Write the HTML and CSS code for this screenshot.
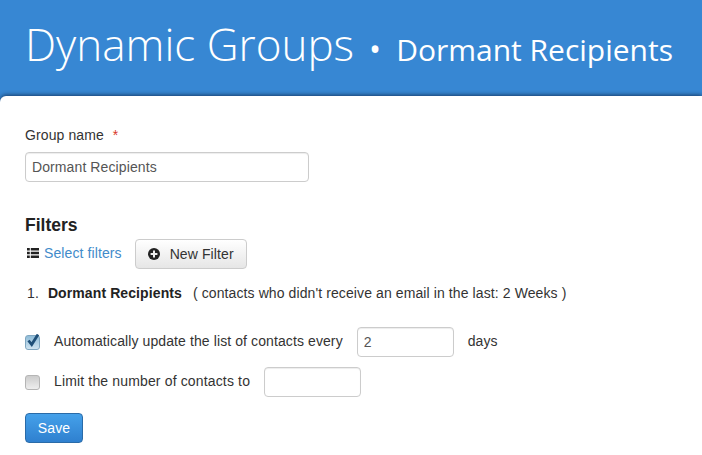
FILE: index.html
```html
<!DOCTYPE html>
<html>
  <head>
    <title>Dynamic Groups</title>
    <meta name="viewport" content="width=device-width, initial-scale=1">
    <link rel="stylesheet" href="styles.css">
  </head>
  <body>
    <div class="header">
      <h1>Dynamic Groups</h1>
      <span class="dot">&bull;</span>
      <h2>Dormant Recipients</h2>
    </div>
    <div class="content">
      <label class="field-label">Group name <span class="required">*</span></label>
      <input class="input name-input" type="text" value="Dormant Recipients">

      <h3>Filters</h3>
      <div class="filter-actions">
        <a class="select-link" href="#">
          <svg width="12" height="10" viewBox="0 0 12 10"><path fill="#222" d="M0 0h2.8v2.6H0zM3.8 0H12v2.6H3.8zM0 3.7h2.8v2.6H0zM3.8 3.7H12v2.6H3.8zM0 7.4h2.8V10H0zM3.8 7.4H12V10H3.8z"/></svg>
          Select filters
        </a>
        <button class="btn">
          <svg width="12" height="12" viewBox="0 0 12 12"><circle cx="6" cy="6" r="6" fill="#222"/><path fill="#eee" d="M5 2.6h2V5h2.4v2H7v2.4H5V7H2.6V5H5z"/></svg>
          New Filter
        </button>
      </div>

      <div class="filter-item">
        <span class="num">1.</span>
        <b>Dormant Recipients</b>
        <span>( contacts who didn't receive an email in the last: 2 Weeks )</span>
      </div>

      <div class="option option-first">
        <span class="check checked">
          <svg width="14" height="14" viewBox="0 0 14 14"><path fill="none" stroke="#1f4f78" stroke-width="2.8" d="M2.5 6.5l3.2 4L12 0.5"/></svg>
        </span>
        <span class="option-text">Automatically update the list of contacts every</span>
        <input class="input small-input" type="text" value="2">
        <span class="days">days</span>
      </div>
      <div class="option option-second">
        <span class="check"></span>
        <span class="option-text">Limit the number of contacts to</span>
        <input class="input small-input" type="text">
      </div>

      <button class="save">Save</button>
    </div>
  </body>
</html>
```

FILE: styles.css
```css
html, body {
  margin: 0;
  height: 100%;
}
body {
  background-color: #3787d3;
  font-family: "Liberation Sans", Arial, sans-serif;
  font-size: 14px;
  letter-spacing: 0.1px;
  color: #333;
  overflow: hidden;
}
.header {
  height: 96px;
  box-sizing: border-box;
  padding: 14px 0 0 25px;
  display: flex;
  align-items: baseline;
  color: white;
  font-family: "Open Sans", sans-serif;
  letter-spacing: 0;
  white-space: nowrap;
}
h1 {
  margin: 0;
  font-size: 44px;
  font-weight: 300;
  line-height: 60px;
}
.dot {
  font-size: 32px;
  margin: 0 15px 0 15px;
}
h2 {
  margin: 0;
  font-size: 30px;
  font-weight: 400;
}
.content {
  background-color: white;
  border-radius: 6px 0 0 0;
  box-shadow: 0 -1px 4px rgba(15, 40, 75, 0.8);
  height: 359px;
  box-sizing: border-box;
  padding: 31px 25px 0 25px;
}
.field-label {
  display: block;
  line-height: 17px;
}
.required {
  color: #d9362b;
  margin-left: 5px;
}
.input {
  display: block;
  box-sizing: border-box;
  height: 30px;
  border: 1px solid #ccc;
  border-radius: 4px;
  padding: 0 6px;
  font-family: inherit;
  font-size: 14px;
  letter-spacing: 0.1px;
  color: #555;
  box-shadow: inset 0 1px 1px rgba(0, 0, 0, 0.075);
}
.name-input {
  width: 284px;
  margin-top: 8px;
}
h3 {
  margin: 33px 0 0 0;
  font-size: 17.5px;
  line-height: 20px;
  letter-spacing: 0;
  color: #222;
}
.filter-actions {
  display: flex;
  align-items: center;
  margin-top: 4px;
}
.select-link {
  display: flex;
  align-items: center;
  gap: 5px;
  color: #428bca;
  text-decoration: none;
  margin: -2px 0 0 2px;
}
.btn {
  margin-left: 13px;
  height: 30px;
  width: 112px;
  display: flex;
  align-items: center;
  justify-content: center;
  gap: 10px;
  border: 1px solid #ccc;
  border-radius: 4px;
  background: linear-gradient(#fff, #e6e6e6);
  font-family: inherit;
  font-size: 14px;
  letter-spacing: 0.1px;
  color: #333;
}
.filter-item {
  display: flex;
  margin-top: 16px;
  line-height: 17px;
}
.num {
  margin: 0 9px 0 2px;
}
.filter-item b {
  color: #222;
  margin-right: 11px;
}
.option {
  display: flex;
  align-items: center;
}
.option-first {
  margin-top: 25px;
}
.option-second {
  margin-top: 10px;
  letter-spacing: 0.15px;
}
.check {
  box-sizing: border-box;
  width: 15px;
  height: 15px;
  border: 1px solid #b5b5b5;
  border-radius: 3px;
  background: linear-gradient(#ccc, #eee);
  flex: none;
}
.check svg {
  display: block;
  margin-top: -2px;
}
.check.checked {
  border-color: #7fa6c0;
  background: linear-gradient(#8fbcd8, #cfe3f0);
}
.option-text {
  margin-left: 14px;
  margin-top: -2px;
}
.small-input {
  width: 97px;
  margin-left: 14px;
}
.days {
  margin-left: 14px;
  margin-top: -2px;
}
.save {
  display: block;
  margin-top: 16px;
  width: 58px;
  height: 30px;
  border: 1px solid #2a6ba8;
  border-radius: 4px;
  background: linear-gradient(#45a1ea, #2f80cf);
  color: white;
  font-family: inherit;
  font-size: 14px;
  letter-spacing: 0.1px;
}
```
